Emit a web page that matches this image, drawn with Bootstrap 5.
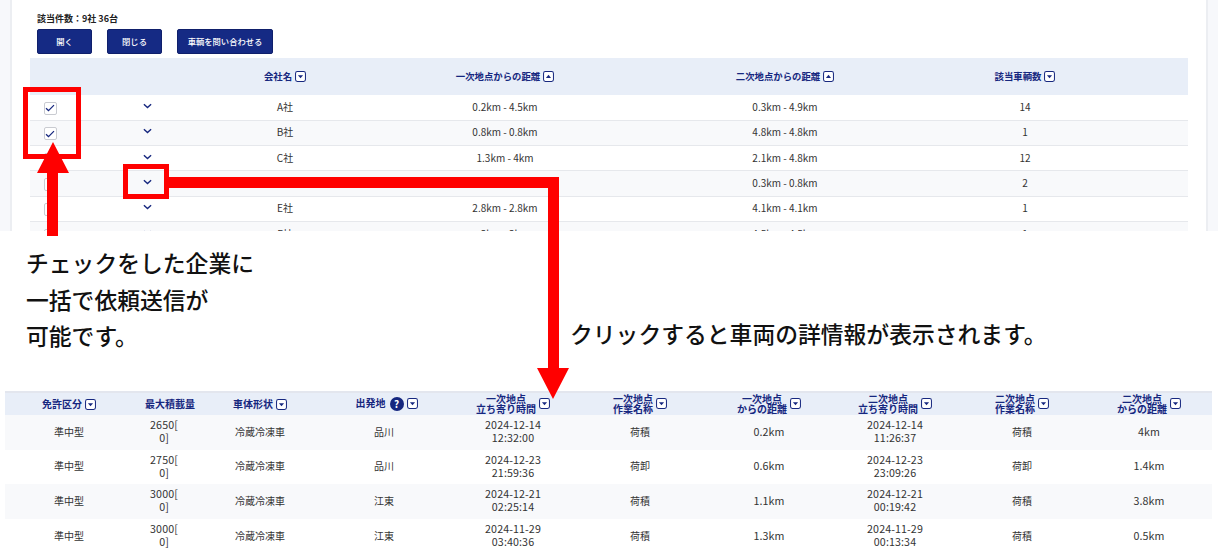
<!DOCTYPE html>
<html lang="ja">
<head>
  <meta charset="UTF-8" />
  <meta name="viewport" content="width=device-width, initial-scale=1.0"/>
  <title>車輌検索結果</title>
  <link href="https://cdn.jsdelivr.net/npm/bootstrap@5.3.0/dist/css/bootstrap.min.css" rel="stylesheet" crossorigin="anonymous">
  <style>
    html, body { margin: 0; background: #fff; }
    body { width: 1218px; height: 548px; overflow: hidden; font-family: "Noto Sans CJK JP", "Noto Sans", sans-serif; color: #333; }
    .sheet { width: 1218px; height: 548px; overflow: hidden; }
    .overlay { position: absolute; left: 0; top: 0; pointer-events: none; }

    /* upper capture */
    .shot-top { height: 231px; overflow: hidden; background: #f7f8fb; padding: 0 10px; }
    .shot-panel { height: 231px; background: #fff; border-left: 2px solid #eceef2; border-right: 2px solid #eceef2; padding: 14px 16px 0 18px; }
    .hit-count { font-size: 9px; font-weight: 700; line-height: 10px; margin: 0 0 5px 7px; color: #222; }
    .act-row { margin: 0 0 4px 7px; gap: 15px; }
    .act-btn { height: 25px; padding: 0; width: 55px; background: #152a84; border: 1px solid #0f1f6b; border-radius: 2px; color: #fff; font-size: 8.3px; font-weight: 500; line-height: 1; }
    .act-btn.wide { width: 96px; }
    .act-btn:hover { background: #152a84; color: #fff; }

    .grid-a, .grid-b { table-layout: fixed; margin: 0; text-align: center; }
    .grid-a > :not(caption) > * > *, .grid-b > :not(caption) > * > * { padding: 0; vertical-align: middle; box-shadow: none; color: #333; background: transparent; }
    .grid-a thead th, .grid-b thead th { background: #e8eef8; color: #16277f; font-weight: 700; border: 0; }

    .grid-a { width: 1158px; font-size: 10px; }
    .grid-a thead th { height: 37px; font-size: 9.4px; }
    .grid-a > tbody > tr > td { height: 25.3px; border-bottom: 1.5px solid #e6e8ec; padding-bottom: 2px; }
    .grid-a tbody tr:nth-child(even) td { background: #f8f9fb; }

    .tick-box { display: inline-flex; align-items: center; justify-content: center; width: 13px; height: 13px; background: #fff; border: 1px solid #c9cbd1; border-radius: 2px; vertical-align: middle; margin-top: 2px; }
    .fold-ico { display: block; margin: -1px auto 0; }
    .sort-ico { vertical-align: -2px; margin-left: 3px; }

    /* notes */
    .notes { height: 160px; }
    .note-left { width: 570px; padding: 14px 0 0 26px; font-size: 22.8px; font-weight: 500; line-height: 36.5px; color: #111; }
    .note-right { padding-top: 88px; font-size: 22.8px; font-weight: 500; line-height: 30px; color: #111; white-space: nowrap; }

    /* lower capture */
    .shot-low { padding-left: 5px; }
    .grid-b { width: 1207px; font-size: 10px; border-top: 2px solid #e3e6ee; }
    .grid-b thead th { height: 23px; font-size: 10px; line-height: 10.5px; }
    .grid-b > tbody > tr > td { height: 34.6px; line-height: 13px; border: 0; padding-bottom: 2px; }
    .grid-b tbody tr:nth-child(odd) td { background: #f8f9fb; }
    .grid-b .num { font-size: 10.7px; letter-spacing: .1px; }
    .grid-b > * > tr > .end-col { padding-right: 9px; }
    .grid-b > * > tr > .no-sort { white-space: nowrap; padding-left: 12px; }
    .grid-b > * > tr > .has-help { padding-left: 5px; }
    .two-line { display: inline-block; vertical-align: middle; }
    .help-dot { display: inline-flex; align-items: center; justify-content: center; width: 14px; height: 14px; margin-left: 4px; background: #16277f; color: #fff; border-radius: 50%; font-size: 10px; font-weight: 700; line-height: 1; vertical-align: -1px; }
  </style>
</head>
<body>
  <svg width="0" height="0" class="d-block position-absolute">
    <symbol id="s-down" viewBox="0 0 12 12"><rect x=".6" y=".6" width="10.8" height="10.8" rx="2" fill="#fff" stroke="#16277f" stroke-width="1.1"/><path d="M3.2 4.6h5.6L6 8z" fill="#16277f"/></symbol>
    <symbol id="s-up" viewBox="0 0 12 12"><rect x=".6" y=".6" width="10.8" height="10.8" rx="2" fill="#fff" stroke="#16277f" stroke-width="1.1"/><path d="M3.2 7.6h5.6L6 4.2z" fill="#16277f"/></symbol>
    <symbol id="s-fold" viewBox="0 0 10 6"><path d="M1 1l4 3.6L9 1" fill="none" stroke="#16277f" stroke-width="1.6"/></symbol>
    <symbol id="s-tick" viewBox="0 0 11 9"><path d="M1 4.8l2.8 2.6L10 1.2" fill="none" stroke="#16277f" stroke-width="1.4"/></symbol>
  </svg>

  <div class="sheet position-relative">
    <section class="shot-top">
      <div class="shot-panel">
        <p class="hit-count">該当件数：9社 36台</p>
        <div class="d-flex act-row">
          <button type="button" class="btn act-btn">開く</button>
          <button type="button" class="btn act-btn">閉じる</button>
          <button type="button" class="btn act-btn wide">車輌を問い合わせる</button>
        </div>
        <table class="table grid-a">
          <colgroup><col width="40"><col width="154"><col width="122"><col width="318"><col width="242"><col width="238"><col width="44"></colgroup>
          <thead>
            <tr>
              <th></th><th></th>
              <th>会社名<svg class="sort-ico" width="11" height="11"><use href="#s-down"/></svg></th>
              <th>一次地点からの距離<svg class="sort-ico" width="11" height="11"><use href="#s-up"/></svg></th>
              <th>二次地点からの距離<svg class="sort-ico" width="11" height="11"><use href="#s-up"/></svg></th>
              <th>該当車輌数<svg class="sort-ico" width="11" height="11"><use href="#s-down"/></svg></th>
              <th></th>
            </tr>
          </thead>
          <tbody>
            <tr><td><span class="tick-box"><svg width="10" height="8"><use href="#s-tick"/></svg></span></td><td><svg class="fold-ico" width="9" height="6"><use href="#s-fold"/></svg></td><td>A社</td><td>0.2km - 4.5km</td><td>0.3km - 4.9km</td><td>14</td><td></td></tr>
            <tr><td><span class="tick-box"><svg width="10" height="8"><use href="#s-tick"/></svg></span></td><td><svg class="fold-ico" width="9" height="6"><use href="#s-fold"/></svg></td><td>B社</td><td>0.8km - 0.8km</td><td>4.8km - 4.8km</td><td>1</td><td></td></tr>
            <tr><td><span class="tick-box"></span></td><td><svg class="fold-ico" width="9" height="6"><use href="#s-fold"/></svg></td><td>C社</td><td>1.3km - 4km</td><td>2.1km - 4.8km</td><td>12</td><td></td></tr>
            <tr><td><span class="tick-box"></span></td><td><svg class="fold-ico" width="9" height="6"><use href="#s-fold"/></svg></td><td>D社</td><td>0.5km - 1.2km</td><td>0.3km - 0.8km</td><td>2</td><td></td></tr>
            <tr><td><span class="tick-box"></span></td><td><svg class="fold-ico" width="9" height="6"><use href="#s-fold"/></svg></td><td>E社</td><td>2.8km - 2.8km</td><td>4.1km - 4.1km</td><td>1</td><td></td></tr>
            <tr><td><span class="tick-box"></span></td><td><svg class="fold-ico" width="9" height="6"><use href="#s-fold"/></svg></td><td>F社</td><td>3km - 3km</td><td>4.5km - 4.5km</td><td>1</td><td></td></tr>
          </tbody>
        </table>
      </div>
    </section>

    <section class="notes d-flex">
      <div class="note-left">チェックをした企業に<br>一括で依頼送信が<br>可能です。</div>
      <div class="note-right">クリックすると車両の詳情報が表示されます。</div>
    </section>

    <section class="shot-low">
      <table class="table grid-b">
        <colgroup><col width="128"><col width="62"><col width="130"><col width="118"><col width="140"><col width="114"><col width="144"><col width="108"><col width="146"><col width="117"></colgroup>
        <thead>
          <tr>
            <th>免許区分<svg class="sort-ico" width="11" height="11"><use href="#s-down"/></svg></th>
            <th class="no-sort">最大積載量</th>
            <th>車体形状<svg class="sort-ico" width="11" height="11"><use href="#s-down"/></svg></th>
            <th class="has-help">出発地<span class="help-dot">?</span><svg class="sort-ico" width="11" height="11"><use href="#s-down"/></svg></th>
            <th><span class="two-line">一次地点<br>立ち寄り時間</span><svg class="sort-ico" width="11" height="11"><use href="#s-down"/></svg></th>
            <th><span class="two-line">一次地点<br>作業名称</span><svg class="sort-ico" width="11" height="11"><use href="#s-down"/></svg></th>
            <th><span class="two-line">一次地点<br>からの距離</span><svg class="sort-ico" width="11" height="11"><use href="#s-down"/></svg></th>
            <th><span class="two-line">二次地点<br>立ち寄り時間</span><svg class="sort-ico" width="11" height="11"><use href="#s-down"/></svg></th>
            <th><span class="two-line">二次地点<br>作業名称</span><svg class="sort-ico" width="11" height="11"><use href="#s-down"/></svg></th>
            <th class="end-col"><span class="two-line">二次地点<br>からの距離</span><svg class="sort-ico" width="11" height="11"><use href="#s-down"/></svg></th>
          </tr>
        </thead>
        <tbody>
          <tr><td>準中型</td><td class="num">2650[<br>0]</td><td>冷蔵冷凍車</td><td>品川</td><td class="num">2024-12-14<br>12:32:00</td><td>荷積</td><td class="num">0.2km</td><td class="num">2024-12-14<br>11:26:37</td><td>荷積</td><td class="num end-col">4km</td></tr>
          <tr><td>準中型</td><td class="num">2750[<br>0]</td><td>冷蔵冷凍車</td><td>品川</td><td class="num">2024-12-23<br>21:59:36</td><td>荷卸</td><td class="num">0.6km</td><td class="num">2024-12-23<br>23:09:26</td><td>荷卸</td><td class="num end-col">1.4km</td></tr>
          <tr><td>準中型</td><td class="num">3000[<br>0]</td><td>冷蔵冷凍車</td><td>江東</td><td class="num">2024-12-21<br>02:25:14</td><td>荷積</td><td class="num">1.1km</td><td class="num">2024-12-21<br>00:19:42</td><td>荷積</td><td class="num end-col">3.8km</td></tr>
          <tr><td>準中型</td><td class="num">3000[<br>0]</td><td>冷蔵冷凍車</td><td>江東</td><td class="num">2024-11-29<br>03:40:36</td><td>荷積</td><td class="num">1.3km</td><td class="num">2024-11-29<br>00:13:34</td><td>荷積</td><td class="num end-col">0.5km</td></tr>
        </tbody>
      </table>
    </section>

    <!-- red callouts drawn over the captures -->
    <svg class="overlay" width="1218" height="548" viewBox="0 0 1218 548">
      <rect x="25.5" y="89.5" width="53" height="67" fill="none" stroke="#f00" stroke-width="5"/>
      <rect x="125.5" y="166.5" width="41" height="30" fill="none" stroke="#f00" stroke-width="5"/>
      <path d="M47 236V173H37L53 142 69 173H58V236z" fill="#f00"/>
      <path d="M169 177H559V368H569L553 399 537 368H548V188H169z" fill="#f00"/>
    </svg>
  </div>

  <script src="https://cdn.jsdelivr.net/npm/bootstrap@5.3.0/dist/js/bootstrap.bundle.min.js" crossorigin="anonymous"></script>
</body>
</html>
